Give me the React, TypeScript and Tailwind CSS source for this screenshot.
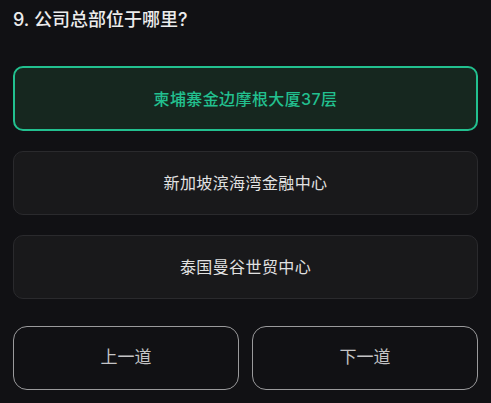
import { useState } from "react";

const OPTIONS = ["柬埔寨金边摩根大厦37层", "新加坡滨海湾金融中心", "泰国曼谷世贸中心"];

export default function App() {
  const [selected, setSelected] = useState(0);

  return (
    <div
      className="min-h-screen w-full bg-[#111114] px-[13px] pt-[7px] pb-[14px]"
      style={{ fontFamily: '"Inter", "Noto Sans CJK SC", sans-serif' }}
    >
      {/* Question */}
      <h2 className="text-[18px] leading-[26px] font-medium text-[#ececec]">9. 公司总部位于哪里?</h2>

      {/* Options */}
      <div className="mt-[33px] flex flex-col gap-[20px]">
        {OPTIONS.map((opt, i) => {
          const active = i === selected;
          return (
            <button
              key={i}
              onClick={() => setSelected(i)}
              className={`w-full rounded-[10px] flex items-center justify-center text-[16px] tracking-[0.4px] ${
                active
                  ? "h-[65px] border-2 border-[#22c08f] bg-[#16271f] text-[#22c08f] font-medium"
                  : "h-[64px] border border-[#2a2a2d] bg-[#19191b] text-[#e2e2e2]"
              }`}
            >
              {opt}
            </button>
          );
        })}
      </div>

      {/* Nav */}
      <div className="mt-[27px] grid grid-cols-2 gap-[13px]">
        <button className="h-[64px] rounded-[14px] border-[1.5px] border-[#9a9a9c] text-[17px] text-[#c4c4c6]">
          上一道
        </button>
        <button className="h-[64px] rounded-[14px] border-[1.5px] border-[#9a9a9c] text-[17px] text-[#c4c4c6]">
          下一道
        </button>
      </div>
    </div>
  );
}
